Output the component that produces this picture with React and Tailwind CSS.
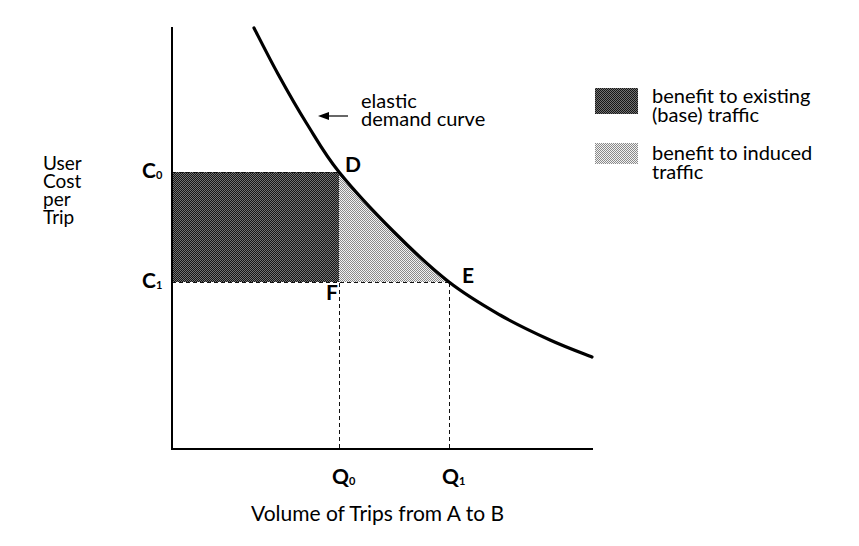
import React from "react";

// demand curve, drawn through a few measured points
const pts = [
  [254, 28], [278, 74], [307, 124], [339, 172], [394, 232],
  [449, 282], [500, 315], [550, 340], [592, 357],
];

const r = (n) => Math.round(n * 10) / 10;

function seg(i) {
  const p0 = pts[Math.max(i - 1, 0)];
  const p1 = pts[i];
  const p2 = pts[i + 1];
  const p3 = pts[Math.min(i + 2, pts.length - 1)];
  const c1 = [r(p1[0] + (p2[0] - p0[0]) / 6), r(p1[1] + (p2[1] - p0[1]) / 6)];
  const c2 = [r(p2[0] - (p3[0] - p1[0]) / 6), r(p2[1] - (p3[1] - p1[1]) / 6)];
  return `C${c1[0]},${c1[1]} ${c2[0]},${c2[1]} ${p2[0]},${p2[1]}`;
}

const curvePath = `M${pts[0][0]},${pts[0][1]} ` + pts.slice(0, -1).map((_, i) => seg(i)).join(" ");
const triPath = `M339,172 ${seg(3)} ${seg(4)} L339,282 Z`;

function Stipple({ id, base, dot }) {
  return (
    <pattern id={id} width="2" height="2" patternUnits="userSpaceOnUse">
      <rect width="2" height="2" fill={base} />
      <rect x="0" y="0" width="1" height="1" fill={dot} />
      <rect x="1" y="1" width="1" height="1" fill={dot} />
    </pattern>
  );
}

function Swatch({ id, base, dot, className }) {
  return (
    <svg className={className} width="43" height="100%">
      <defs>
        <Stipple id={id} base={base} dot={dot} />
      </defs>
      <rect width="43" height="100%" fill={`url(#${id})`} />
    </svg>
  );
}

function Sub({ children }) {
  return (
    <tspan fontSize="11" dy="1">
      {children}
    </tspan>
  );
}

function Chart() {
  return (
    <svg width="495" height="490" viewBox="100 0 495 490" className="block">
      <defs>
        <Stipple id="dark" base="#151515" dot="#727272" />
        <Stipple id="light" base="#f2f2f2" dot="#8a8a8a" />
      </defs>

      {/* benefit areas */}
      <rect x="172" y="172" width="167" height="110" fill="url(#dark)" />
      <path d={triPath} fill="url(#light)" />

      {/* guide lines */}
      <g stroke="#111" strokeWidth="1" strokeDasharray="4 3" fill="none">
        <line x1="172" y1="172.5" x2="339" y2="172.5" />
        <line x1="172" y1="282.5" x2="449" y2="282.5" />
        <line x1="339.5" y1="283" x2="339.5" y2="449" />
        <line x1="449.5" y1="283" x2="449.5" y2="449" />
      </g>

      {/* axes */}
      <g stroke="#000" strokeWidth="2">
        <line x1="172" y1="27" x2="172" y2="450" />
        <line x1="171" y1="449" x2="593" y2="449" />
      </g>

      <path d={curvePath} fill="none" stroke="#000" strokeWidth="3.2" strokeLinecap="round" />

      {/* annotation arrow */}
      <line x1="326" y1="116" x2="348" y2="116" stroke="#000" strokeWidth="1.2" />
      <path d="M318,116 L329,112 L329,120 Z" fill="#000" />
      <text x="361" y="108" fontSize="20">elastic</text>
      <text x="361" y="126" fontSize="20">demand curve</text>

      <g fontWeight="700" fontSize="21">
        <text x="142" y="178">
          C<Sub>0</Sub>
        </text>
        <text x="142" y="288">
          C<Sub>1</Sub>
        </text>
        <text x="345" y="172">D</text>
        <text x="462" y="283">E</text>
        <text x="326" y="300">F</text>
        <text x="332" y="484">
          Q<Sub>0</Sub>
        </text>
        <text x="442" y="484">
          Q<Sub>1</Sub>
        </text>
      </g>
    </svg>
  );
}

export default function App() {
  return (
    <div className="w-[859px] h-[546px] bg-white text-black flex font-['Lato',sans-serif] overflow-hidden">
      <div className="w-[100px] shrink-0 pl-[43px] pt-[154px] text-[19px] leading-[18px]">
        <p>User</p>
        <p>Cost</p>
        <p>per</p>
        <p>Trip</p>
      </div>

      <div className="w-[495px] shrink-0 flex flex-col">
        <Chart />
        <p className="mt-[11px] pl-[60px] text-center text-[21px] leading-[24px]">
          Volume of Trips from A to B
        </p>
      </div>

      <div className="pt-[86px] flex flex-col text-[20px] leading-[19px]">
        <div className="flex gap-[14px]">
          <Swatch id="sw-dark" base="#151515" dot="#727272" className="mt-[2px] h-[26px] shrink-0" />
          <div>
            <p>benefit to existing</p>
            <p>(base) traffic</p>
          </div>
        </div>
        <div className="flex gap-[14px] mt-[19px]">
          <Swatch id="sw-light" base="#f2f2f2" dot="#8a8a8a" className="h-[21px] shrink-0" />
          <div>
            <p>benefit to induced</p>
            <p>traffic</p>
          </div>
        </div>
      </div>
    </div>
  );
}
